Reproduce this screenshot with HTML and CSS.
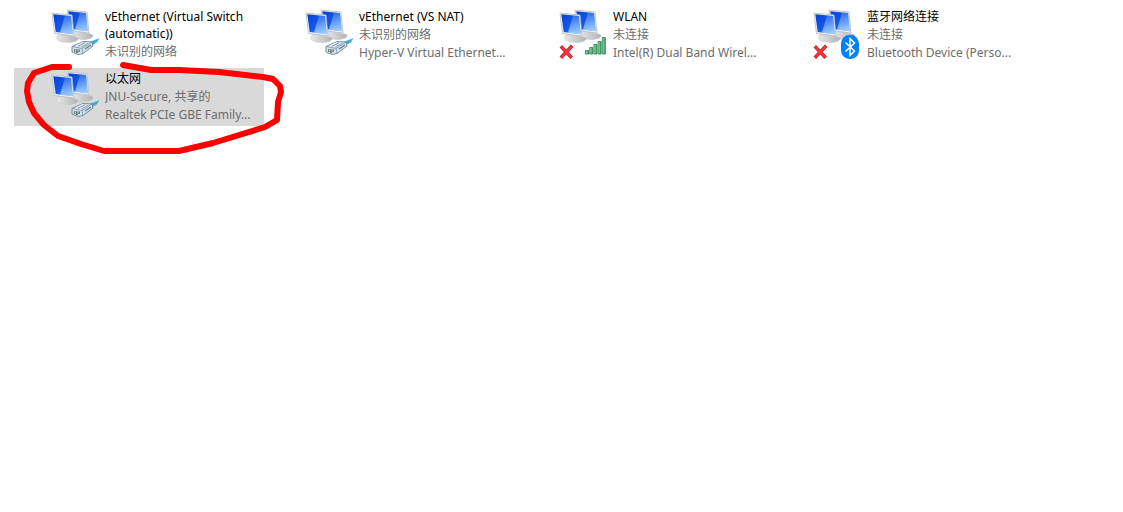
FILE: index.html
```html
<!DOCTYPE html>
<html lang="zh-CN">
<head>
<meta charset="utf-8">
<title>网络连接</title>
<link rel="stylesheet" href="styles.css">
</head>
<body>
<svg class="defs" aria-hidden="true">
  <defs>
    <linearGradient id="screen" x1="0" y1="0" x2="1" y2="1">
      <stop offset="0" stop-color="#0b3fd0"/><stop offset=".5" stop-color="#1259ea"/><stop offset="1" stop-color="#3d9bff"/>
    </linearGradient>
    <linearGradient id="shine" x1="0" y1="0" x2="0" y2="1">
      <stop offset="0" stop-color="#9cc8ff" stop-opacity=".25"/><stop offset="1" stop-color="#cfe9ff" stop-opacity=".7"/>
    </linearGradient>
    <linearGradient id="stand" x1="0" y1="0" x2="1" y2="0">
      <stop offset="0" stop-color="#e8e8e8"/><stop offset="1" stop-color="#b0b2b5"/>
    </linearGradient>
    <linearGradient id="bar" x1="0" y1="0" x2="1" y2="0">
      <stop offset="0" stop-color="#a8e2ba"/><stop offset="1" stop-color="#3a9b60"/>
    </linearGradient>
    <g id="monitor">
      <path d="M9 21l9 1 1 2.500c5 0 7 1 7 2.300c0 2.200-5 3.700-9.500 3.700c-6 0-12-1.800-12-4.700c0-1.500 1.500-3.300 4.500-3.800z" fill="url(#stand)" stroke="#bcbfc2" stroke-width=".5"/>
      <path d="M0 1L20 3 22 24 2.500 21.500z" fill="#f1f3f5" stroke="#b5bac0" stroke-width=".8" stroke-linejoin="round"/>
      <path d="M1.300 2.200L19 4 20.800 22.300 3.700 20z" fill="url(#screen)"/>
      <path d="M13 3.400L19 4 20.800 22.300 8 20.600z" fill="url(#shine)"/>
    </g>
    <g id="computers">
      <use href="#monitor" x="17" y="1"/>
      <use href="#monitor" x="2" y="4"/>
    </g>
    <g id="plug" stroke-linejoin="round">
      <path d="M40 34l9-3.500-2 3.500-5 3z" fill="#35a8d8" stroke="#60bce0" stroke-width=".6"/>
      <path d="M22 38.500L33 33.500 42 34 43 38 33 45.500 28 46.500 22 44z" fill="#d5e1eb" stroke="#68859e" stroke-width=".9"/>
      <path d="M22 38.500L32 40.500 42 34M32 40.500L33 45.500" fill="none" stroke="#7892a8" stroke-width=".8"/>
      <path d="M26 38l7-3.500M29.500 38.500l7-3.500M33 38.500l6-3.500" stroke="#fff" stroke-width="1"/>
      <path d="M28 38.300l7-3.500M31.500 38.800l7-3.500" stroke="#5f7d95" stroke-width=".8"/>
      <path d="M24 41v3h2v1h2v-1h2v-2.500z" fill="#6f8479"/>
      <path d="M25.500 41.500v2M28 41.500v2" stroke="#e6e0a8" stroke-width=".8"/>
      <path d="M35 41l6-4" stroke="#5f86a3" stroke-width="1.500"/>
    </g>
    <g id="cross" fill="none" stroke-linecap="square">
      <path d="M4 39.500L12.500 48.500M13 39L4 48.500" stroke="#c41920" stroke-width="3.400"/>
      <path d="M4 39.500L12.500 48.500M13 39L4 48.500" stroke="#f0383c" stroke-width="2"/>
    </g>
    <g id="signal" fill="url(#bar)" stroke="#237745" stroke-width=".8">
      <path d="M27.500 42.500h3v3.500h-3z"/><path d="M31.700 39.500h3v6.500h-3z"/><path d="M35.900 36.500h3v9.500h-3z"/><path d="M40.100 33.500h3v12.500h-3z"/><path d="M44.300 29.500h3v16.500h-3z"/>
    </g>
    <g id="bluetooth">
      <rect x="29" y="27" width="18" height="24" rx="8.500" fill="#0082fc"/>
      <path d="M33.500 34.500L42.500 43 38 47.500V30.500L42.500 35 33.500 43.500" fill="none" stroke="#fff" stroke-width="1.500"/>
    </g>
  </defs>
</svg>
<main class="connections">
  <ul class="grid">
    <li class="item">
      <svg class="icon" viewBox="0 0 50 52" aria-hidden="true"><use href="#computers"/><use href="#plug"/></svg>
      <div class="text">
        <h2 class="name">vEthernet (Virtual Switch (automatic))</h2>
        <p class="detail">未识别的网络</p>
      </div>
    </li>
    <li class="item">
      <svg class="icon" viewBox="0 0 50 52" aria-hidden="true"><use href="#computers"/><use href="#plug"/></svg>
      <div class="text">
        <h2 class="name">vEthernet (VS NAT)</h2>
        <p class="detail">未识别的网络</p>
        <p class="detail">Hyper-V Virtual Ethernet...</p>
      </div>
    </li>
    <li class="item">
      <svg class="icon" viewBox="0 0 50 52" aria-hidden="true"><use href="#computers"/><use href="#cross"/><use href="#signal"/></svg>
      <div class="text">
        <h2 class="name">WLAN</h2>
        <p class="detail">未连接</p>
        <p class="detail">Intel(R) Dual Band Wirel...</p>
      </div>
    </li>
    <li class="item">
      <svg class="icon" viewBox="0 0 50 52" aria-hidden="true"><use href="#computers"/><use href="#cross"/><use href="#bluetooth"/></svg>
      <div class="text">
        <h2 class="name">蓝牙网络连接</h2>
        <p class="detail">未连接</p>
        <p class="detail">Bluetooth Device (Perso...</p>
      </div>
    </li>
    <li class="item selected">
      <svg class="icon" viewBox="0 0 50 52" aria-hidden="true"><use href="#computers"/><use href="#plug"/></svg>
      <div class="text">
        <h2 class="name">以太网</h2>
        <p class="detail">JNU-Secure, 共享的</p>
        <p class="detail">Realtek PCIe GBE Family...</p>
      </div>
      <svg class="marker" viewBox="0 0 264 96" aria-hidden="true">
        <path d="M48 7L31 7 13 13 7 23 6 31 8 42 13 53 23 65 37 76 60 84 83 91H158L192 83 244 67 256 60 257 42 260 32 259 26 252 19 242 17 198 12 158 10 130 10 102 5"/>
      </svg>
    </li>
  </ul>
</main>
</body>
</html>
```

FILE: styles.css
```css
body {
  min-height: 100vh;
  margin: 0;
  background: #fff;
  color: #000;
  font: 12px/18px "Noto Sans", "Noto Sans CJK SC", sans-serif;
}

.defs {
  position: absolute;
  width: 0;
  height: 0;
}

.connections {
  padding: 6px 14px;
}

.grid {
  display: grid;
  grid-template-columns: repeat(auto-fill, 250px);
  gap: 4px;
  margin: 0;
  padding: 0;
  list-style: none;
}

.item {
  position: relative;
  display: flex;
  gap: 5px;
  min-height: 58px;
  box-sizing: border-box;
  padding: 2px 4px 2px 36px;
}

.selected {
  background: #d9d9d9;
}

.icon {
  flex: none;
  width: 50px;
  height: 52px;
}

.text {
  flex: 1;
  min-width: 0;
}

.name {
  margin: 0 0 1px;
  font-size: 12px;
  font-weight: 400;
  line-height: 17px;
}

.detail {
  margin: 0;
  overflow: hidden;
  color: #6d6d6d;
  white-space: nowrap;
}

.marker {
  position: absolute;
  top: -8px;
  left: 7px;
  width: 264px;
  height: 96px;
  pointer-events: none;
  fill: none;
  stroke: #f00;
  stroke-width: 6px;
  stroke-linecap: round;
  stroke-linejoin: round;
}
```
